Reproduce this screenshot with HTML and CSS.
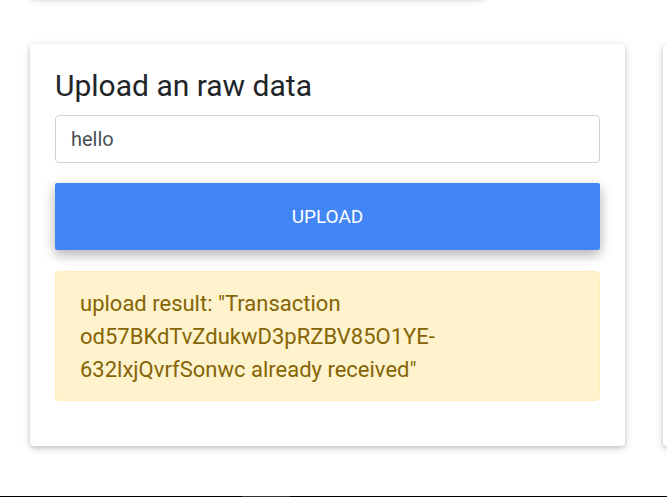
FILE: index.html
```html
<!DOCTYPE html>
<html lang="en">
<head>
<meta charset="utf-8">
<title>Upload</title>
<link rel="stylesheet" href="styles.css">
</head>
<body>
<div class="page">
  <div class="top-row">
    <div class="card top-card"></div>
  </div>
  <div class="track">
    <div class="card side-card"></div>
    <div class="card main-card">
      <h3 class="title">Upload an raw data</h3>
      <input class="field" type="text" value="hello">
      <button class="btn-upload" type="button">UPLOAD</button>
      <div class="alert">upload result: "Transaction od57BKdTvZdukwD3pRZBV85O1YE-632lxjQvrfSonwc already received"</div>
    </div>
    <div class="card side-card"></div>
  </div>
  <div class="bottom-bar"><span class="bar-thumb"></span></div>
</div>
</body>
</html>
```

FILE: styles.css
```css
html, body {
  margin: 0;
  padding: 0;
  background: #fff;
  overflow: hidden;
}
.page {
  height: 497px;
  display: flex;
  flex-direction: column;
  font-family: Roboto, "Liberation Sans", sans-serif;
  color: #212529;
}
.card {
  background: #fff;
  border-radius: 4px;
  box-shadow: 0 2px 5px 0 rgba(0,0,0,.16), 0 2px 10px 0 rgba(0,0,0,.12);
  box-sizing: border-box;
}
.top-row {
  height: 44px;
  display: flex;
  flex-shrink: 0;
}
.top-card {
  width: 455px;
  height: 100px;
  margin-top: -103px;
  margin-left: 30px;
}
.track {
  display: flex;
  gap: 38px;
  margin-left: -603px;
  flex-shrink: 0;
}
.side-card {
  width: 595px;
  height: 402px;
  flex-shrink: 0;
}
.main-card {
  width: 595px;
  height: 402px;
  flex-shrink: 0;
  padding: 24px 25px 0 25px;
  display: flex;
  flex-direction: column;
}
.title {
  margin: 0 0 11px 0;
  font-size: 30px;
  font-weight: 400;
  line-height: 36px;
  color: #212529;
}
.field {
  box-sizing: border-box;
  width: 100%;
  height: 48px;
  margin: 0;
  padding: 8px 15px;
  font-family: inherit;
  font-size: 20px;
  color: #495057;
  border: 1px solid #ced4da;
  border-radius: 4px;
  background: #fff;
  outline: none;
}
.btn-upload {
  margin: 20px 0 0 0;
  height: 67px;
  width: 100%;
  border: 0;
  border-radius: 2px;
  background: #4285f4;
  color: #fff;
  font-family: inherit;
  font-size: 19px;
  box-shadow: 0 5px 11px 0 rgba(0,0,0,.18), 0 4px 15px 0 rgba(0,0,0,.15);
}
.alert {
  margin-top: 21px;
  box-sizing: border-box;
  height: 130px;
  padding: 15px 24px 0 24px;
  background: #fff3cd;
  border: 1px solid #ffeeba;
  border-radius: 4px;
  color: #856404;
  font-size: 22px;
  line-height: 33px;
}
.bottom-bar {
  margin-top: auto;
  height: 1px;
  background: #000;
  position: relative;
}
.bar-thumb {
  position: absolute;
  left: 242px;
  width: 48px;
  top: 0;
  height: 1px;
  background: #333;
}
```
